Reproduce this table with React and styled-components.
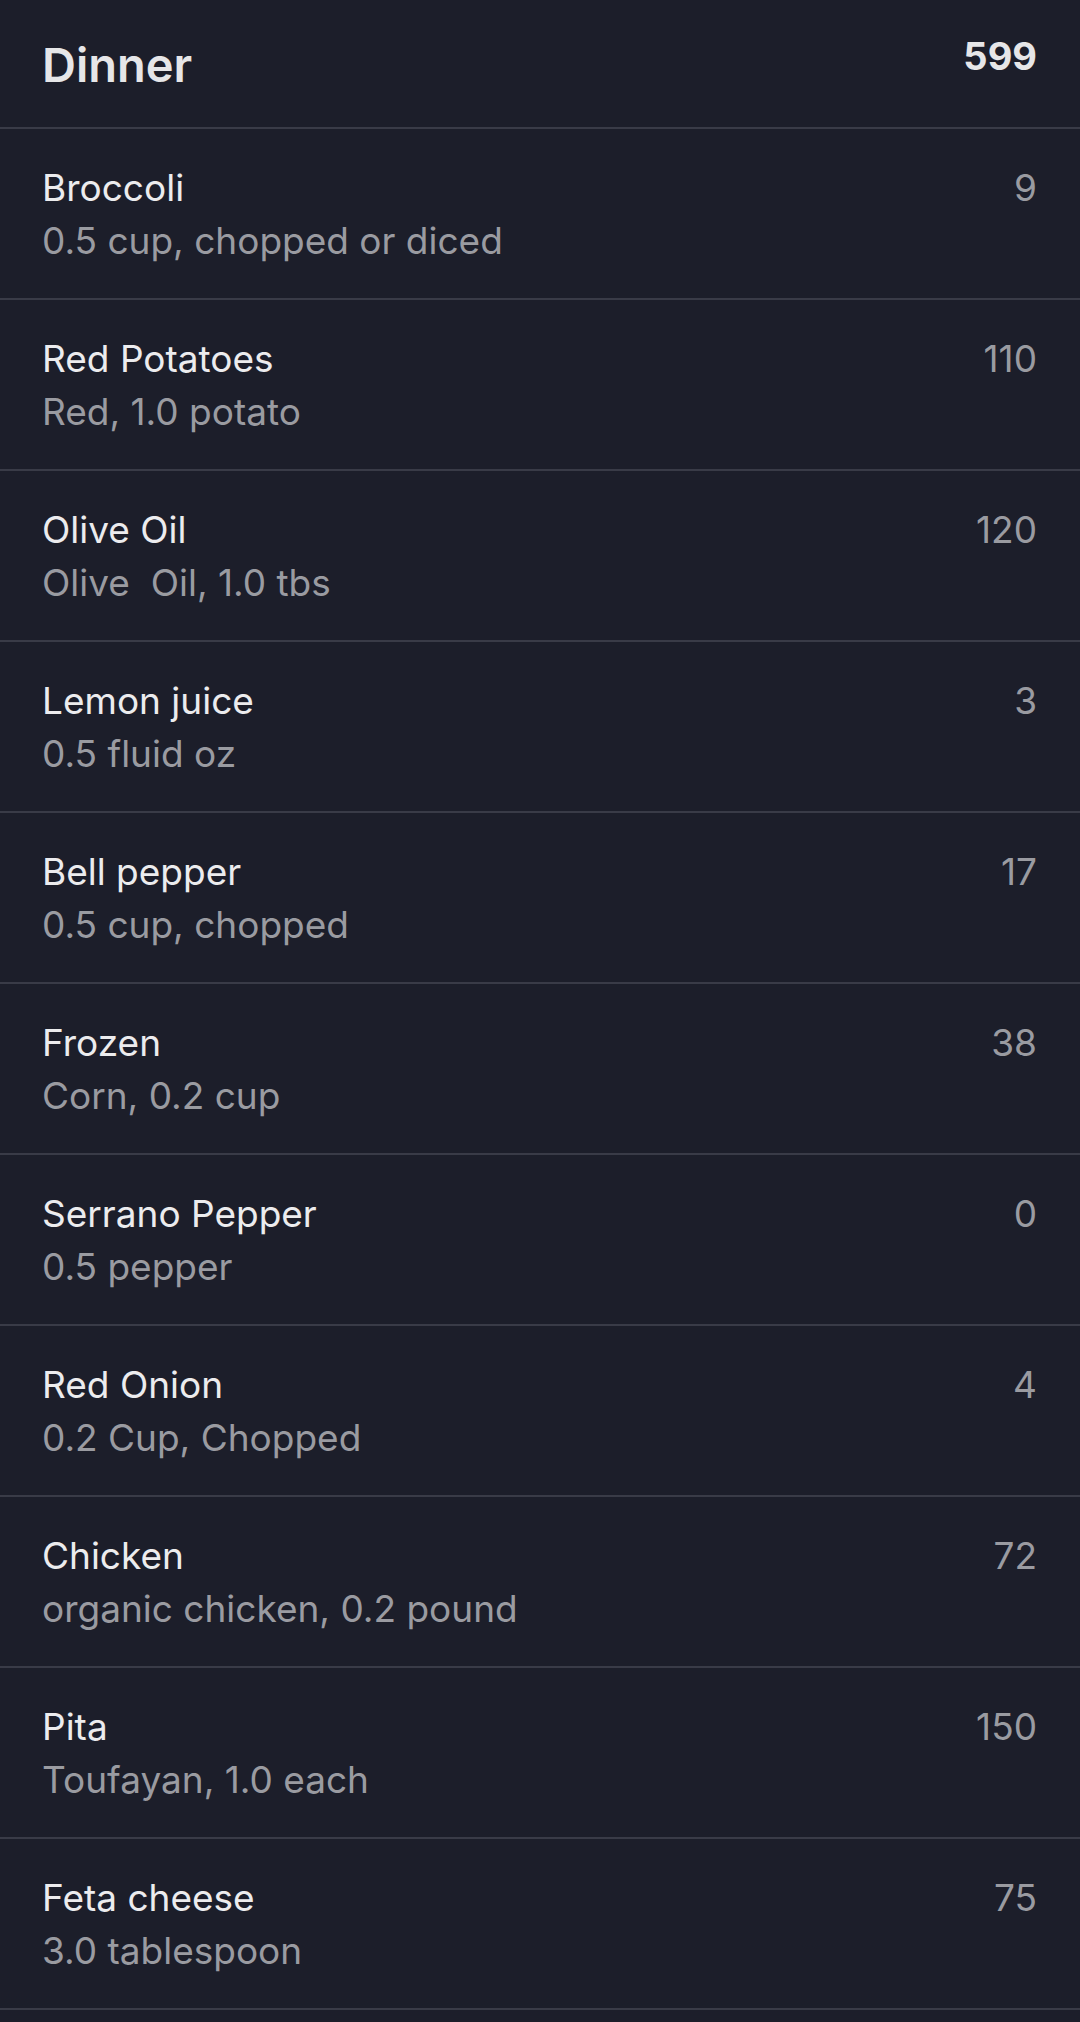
import React from 'react'
import styled, { createGlobalStyle } from 'styled-components'

const GlobalStyle = createGlobalStyle`
  html, body {
    margin: 0;
    padding: 0;
    background: #1c1e2a;
  }
  body {
    font-family: Inter, "Noto Sans", "Liberation Sans", sans-serif;
    -webkit-font-smoothing: antialiased;
  }
`

// calories come in rounded, so the meal total is stored rather than summed
const meal = {
  title: 'Dinner',
  total: 599,
  items: [
    { name: 'Broccoli', detail: '0.5 cup, chopped or diced', cal: 9 },
    { name: 'Red Potatoes', detail: 'Red, 1.0 potato', cal: 110 },
    { name: 'Olive Oil', detail: 'Olive  Oil, 1.0 tbs', cal: 120 },
    { name: 'Lemon juice', detail: '0.5 fluid oz', cal: 3 },
    { name: 'Bell pepper', detail: '0.5 cup, chopped', cal: 17 },
    { name: 'Frozen', detail: 'Corn, 0.2 cup', cal: 38 },
    { name: 'Serrano Pepper', detail: '0.5 pepper', cal: 0 },
    { name: 'Red Onion', detail: '0.2 Cup, Chopped', cal: 4 },
    { name: 'Chicken', detail: 'organic chicken, 0.2 pound', cal: 72 },
    { name: 'Pita', detail: 'Toufayan, 1.0 each', cal: 150 },
    { name: 'Feta cheese', detail: '3.0 tablespoon', cal: 75 },
  ],
}

const App = () => {
  return (
    <Page>
      <GlobalStyle />
      <MealHeader>
        <MealTitle>{meal.title}</MealTitle>
        <MealTotal>{meal.total}</MealTotal>
      </MealHeader>
      <FoodList>
        {meal.items.map((item) => (
          <FoodRow key={item.name}>
            <FoodInfo>
              <FoodName>{item.name}</FoodName>
              <FoodDetail>{item.detail}</FoodDetail>
            </FoodInfo>
            <FoodCalories>{item.cal}</FoodCalories>
          </FoodRow>
        ))}
      </FoodList>
    </Page>
  )
}

const Page = styled.div`
  min-height: 100vh;
  background: #1c1e2a;
  color: #ececee;
`

const MealHeader = styled.header`
  box-sizing: border-box;
  height: 129px;
  display: flex;
  justify-content: space-between;
  align-items: flex-start;
  padding: 33px 43px 0 42px;
  border-bottom: 2px solid #393b47;
`

const MealTitle = styled.h1`
  margin: 4px 0 0;
  font-size: 47px;
  line-height: 56px;
  font-weight: 600;
  color: #e6e6e8;
`

const MealTotal = styled.span`
  font-size: 38px;
  line-height: 46px;
  font-weight: 700;
  color: #e6e6e8;
`

const FoodList = styled.ul`
  list-style: none;
  margin: 0;
  padding: 0;
`

const FoodRow = styled.li`
  box-sizing: border-box;
  height: 171px;
  display: flex;
  justify-content: space-between;
  align-items: flex-start;
  padding: 32px 43px 0 42px;
  border-bottom: 2px solid #393b47;
`

const FoodInfo = styled.div`
  display: flex;
  flex-direction: column;
`

const FoodName = styled.span`
  font-size: 37px;
  line-height: 53px;
  color: #ececee;
`

const FoodDetail = styled.span`
  font-size: 37px;
  line-height: 53px;
  color: #9a9ba1;
  white-space: pre;
`

const FoodCalories = styled.span`
  font-size: 37px;
  line-height: 53px;
  color: #9a9ba1;
`

export default App
